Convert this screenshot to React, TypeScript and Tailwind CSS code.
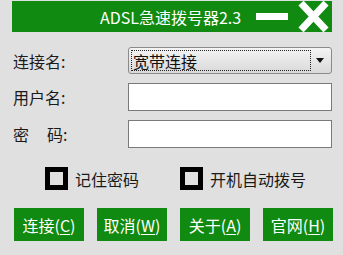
import React from 'react'

const font = { fontFamily: '"Noto Sans CJK SC", "Noto Sans", sans-serif' }

function Check({ label }: { label: string }) {
  return (
    <div className="flex items-center gap-[7px]">
      <div className="w-[23px] h-[23px] border-[5px] border-black bg-[#e0e0e0]" />
      <span className="text-[16px] leading-none text-[#1a1a1a]">{label}</span>
    </div>
  )
}

function Btn({ text, hot }: { text: string; hot: string }) {
  return (
    <button className="w-[70px] h-[33px] bg-[#108a10] text-white text-[16px] leading-none flex items-center justify-center">
      {text}(<span className="underline underline-offset-2">{hot}</span>)
    </button>
  )
}

export default function App() {
  return (
    <div className="w-[343px] h-[255px] bg-[#e0e0e0] overflow-hidden select-none" style={font}>
      {/* Title bar */}
      <div className="ml-[12px] mr-[11px] mt-[1px] h-[31px] bg-[#108a10] flex items-center">
        <span className="ml-[88px] text-white text-[16px] leading-none">ADSL急速拨号器2.3</span>
        <div className="ml-[15px] w-[32px] h-[7px] bg-white" />
        <svg className="ml-[10px]" width="31" height="31" viewBox="0 0 31 31">
          <path d="M3 2 L28 29 M28 2 L3 29" stroke="white" strokeWidth="7" />
        </svg>
      </div>

      {/* Form */}
      <div className="mt-[15px] pl-[13px] pr-[11px] flex flex-col gap-[9px]">
        <div className="flex items-center justify-between">
          <span className="text-[16px] leading-none text-[#1a1a1a]">连接名:</span>
          <div className="w-[204px] h-[27px] rounded-[3px] border border-[#8a8a8a] bg-gradient-to-b from-[#f4f4f4] to-[#d9d9d9] p-[2px] flex items-center">
            <div className="flex-1 h-full border border-dotted border-[#222] flex items-center pl-[1px]">
              <span className="text-[16px] leading-none text-[#111]">宽带连接</span>
            </div>
            <svg className="mx-[5px]" width="8" height="5" viewBox="0 0 8 5">
              <path d="M0 0 H8 L4 5 Z" fill="#111" />
            </svg>
          </div>
        </div>
        <div className="flex items-center justify-between">
          <span className="text-[16px] leading-none text-[#1a1a1a]">用户名:</span>
          <div className="w-[204px] h-[28px] border border-[#7a7a7a] bg-white" />
        </div>
        <div className="flex items-center justify-between">
          <span className="text-[16px] leading-none text-[#1a1a1a] flex">
            <span>密</span>
            <span className="ml-[18px]">码:</span>
          </span>
          <div className="w-[204px] h-[28px] border border-[#7a7a7a] bg-white" />
        </div>
      </div>

      {/* Options */}
      <div className="mt-[19px] pl-[45px] flex items-center gap-[41px]">
        <Check label="记住密码" />
        <Check label="开机自动拨号" />
      </div>

      {/* Buttons */}
      <div className="mt-[18px] pl-[14px] flex gap-[13px]">
        <Btn text="连接" hot="C" />
        <Btn text="取消" hot="W" />
        <Btn text="关于" hot="A" />
        <Btn text="官网" hot="H" />
      </div>
    </div>
  )
}
